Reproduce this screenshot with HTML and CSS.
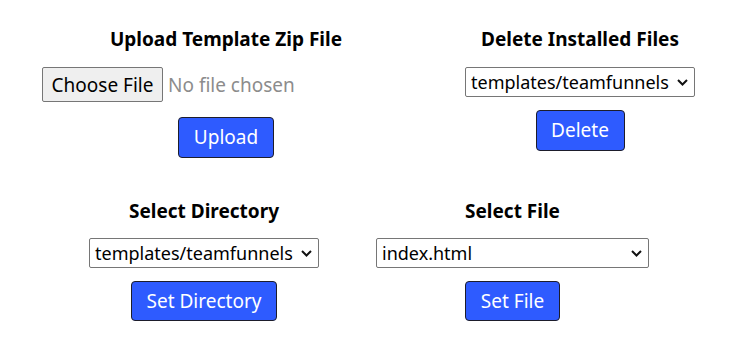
FILE: index.html
```html
<!DOCTYPE html>
<html lang="en">
<head>
<meta charset="utf-8">
<title>Template Manager</title>
<link rel="stylesheet" href="styles.css">
</head>
<body>
<div class="page">
  <div class="row row-top">
    <section class="col col-upload">
      <h3 class="heading">Upload Template Zip File</h3>
      <div class="file-input">
        <span class="file-btn">Choose File</span>
        <span class="file-name">No file chosen</span>
      </div>
      <button class="btn btn-upload" type="button">Upload</button>
    </section>
    <section class="col col-delete">
      <h3 class="heading">Delete Installed Files</h3>
      <div class="select select-230 select-tight">
        <span class="select-value">templates/teamfunnels</span>
        <svg class="chev" width="11" height="7" viewBox="0 0 11 7"><path d="M1 1 L5.5 5.5 L10 1" fill="none" stroke="#111" stroke-width="2"/></svg>
      </div>
      <button class="btn btn-delete" type="button">Delete</button>
    </section>
  </div>
  <div class="row row-bottom">
    <section class="col col-dir">
      <h3 class="heading">Select Directory</h3>
      <div class="select select-230 select-tight">
        <span class="select-value">templates/teamfunnels</span>
        <svg class="chev" width="11" height="7" viewBox="0 0 11 7"><path d="M1 1 L5.5 5.5 L10 1" fill="none" stroke="#111" stroke-width="2"/></svg>
      </div>
      <button class="btn btn-dir" type="button">Set Directory</button>
    </section>
    <section class="col col-file">
      <h3 class="heading">Select File</h3>
      <div class="select select-273">
        <span class="select-value">index.html</span>
        <svg class="chev" width="11" height="7" viewBox="0 0 11 7"><path d="M1 1 L5.5 5.5 L10 1" fill="none" stroke="#111" stroke-width="2"/></svg>
      </div>
      <button class="btn btn-file" type="button">Set File</button>
    </section>
  </div>
</div>
</body>
</html>
```
FILE: styles.css
```css
html, body {
  margin: 0;
  padding: 0;
  background: #ffffff;
}

body {
  font-family: "Noto Sans", "Open Sans", sans-serif;
  color: #000;
  font-size: 19px;
}

.page {
  display: flex;
  flex-direction: column;
  gap: 39px;
  padding-top: 25px;
}

.row {
  display: flex;
  align-items: flex-start;
}

.row-top {
  padding-left: 42px;
  gap: 55px;
}

.row-bottom {
  padding-left: 89px;
  gap: 57px;
}

.col {
  display: flex;
  flex-direction: column;
  align-items: center;
}

.col-upload { width: 368px; }
.col-delete { width: 230px; }
.col-dir { width: 230px; }
.col-file { width: 273px; }

.heading {
  margin: 0;
  font-size: 19px;
  font-weight: 700;
  line-height: 28px;
  white-space: nowrap;
}

.file-input {
  margin-top: 14px;
  width: 368px;
  display: flex;
  align-items: center;
  gap: 5px;
}

.file-btn {
  box-sizing: border-box;
  height: 35px;
  width: 121px;
  display: flex;
  align-items: center;
  justify-content: center;
  background: #efefef;
  border: 1px solid #767676;
  border-radius: 2px;
  font-size: 19px;
  color: #000;
}

.file-name {
  font-size: 19px;
  color: #8c8c8c;
}

.select {
  box-sizing: border-box;
  height: 30px;
  margin-top: 14px;
  display: flex;
  align-items: center;
  justify-content: space-between;
  border: 1px solid #767676;
  border-radius: 2px;
  padding: 0 6px 0 5px;
  font-size: 18px;
  background: #fff;
}

.row-bottom .select { margin-top: 13px; }

.select-230 { width: 230px; }
.select-273 { width: 273px; }

.select-tight .chev { margin-left: 4px; }

.select-value {
  white-space: nowrap;
  line-height: 28px;
}

.chev {
  flex: none;
}

.btn {
  box-sizing: border-box;
  height: 41px;
  padding: 0 12px;
  background: #2e5bff;
  color: #fff;
  border: 1px solid #1d1d2b;
  border-radius: 4px;
  font-family: inherit;
  font-size: 19px;
  line-height: 1;
  cursor: pointer;
}

.btn-upload { margin-top: 15px; width: 96px; }
.btn-delete { margin-top: 13px; width: 89px; }
.btn-dir { margin-top: 13px; height: 40px; width: 146px; }
.btn-file { margin-top: 13px; height: 40px; width: 95px; }
```
